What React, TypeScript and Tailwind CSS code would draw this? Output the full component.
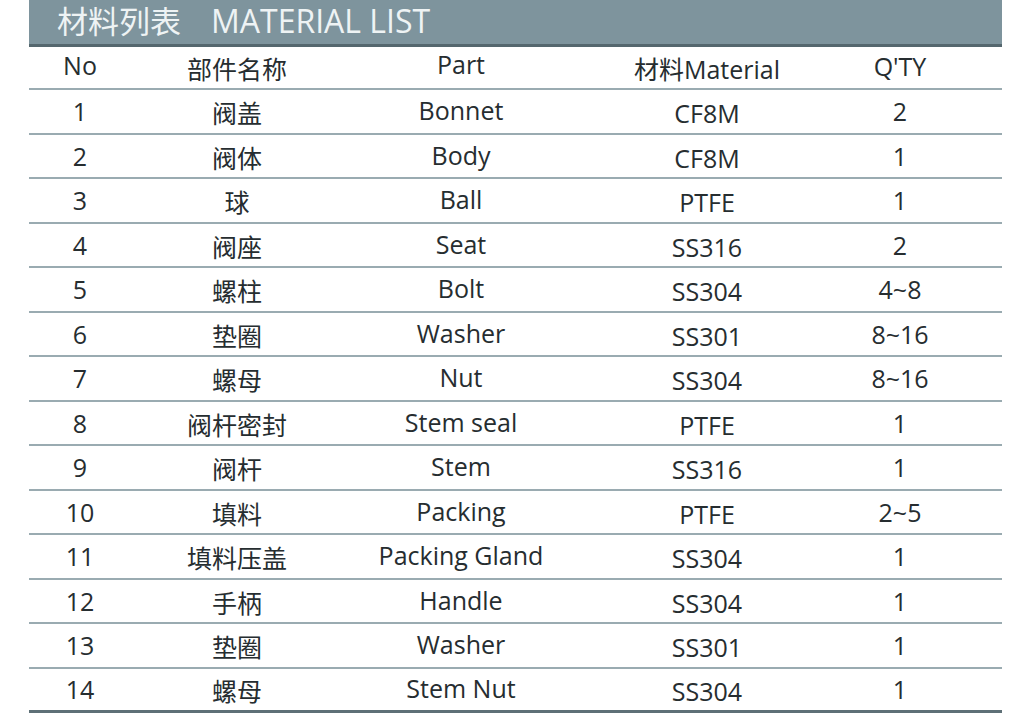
import React from "react";

const rows: [string, string, string, string, string][] = [
  ["1", "阀盖", "Bonnet", "CF8M", "2"],
  ["2", "阀体", "Body", "CF8M", "1"],
  ["3", "球", "Ball", "PTFE", "1"],
  ["4", "阀座", "Seat", "SS316", "2"],
  ["5", "螺柱", "Bolt", "SS304", "4~8"],
  ["6", "垫圈", "Washer", "SS301", "8~16"],
  ["7", "螺母", "Nut", "SS304", "8~16"],
  ["8", "阀杆密封", "Stem seal", "PTFE", "1"],
  ["9", "阀杆", "Stem", "SS316", "1"],
  ["10", "填料", "Packing", "PTFE", "2~5"],
  ["11", "填料压盖", "Packing Gland", "SS304", "1"],
  ["12", "手柄", "Handle", "SS304", "1"],
  ["13", "垫圈", "Washer", "SS301", "1"],
  ["14", "螺母", "Stem Nut", "SS304", "1"],
];

const font = { fontFamily: '"Open Sans", "Noto Sans CJK SC", sans-serif' };

export default function App() {
  return (
    <div className="w-[1024px] h-[725px] bg-white overflow-hidden" style={font}>
      <div className="ml-[29px] w-[973px]">
        <div className="h-[47px] bg-[#7e949d] border-b-[3px] border-[#55676e] flex items-center pl-[28px] text-[#eef3f4]">
          <span className="text-[31px] leading-[40px] pb-[3px]">材料列表</span>
          <span className="text-[32px] leading-[40px] pb-[3px] ml-[30px]">MATERIAL LIST</span>
        </div>
        <div className="grid grid-cols-[102px_212px_236px_256px_130px_1fr] h-[43px] border-b-[2px] border-[#9aabb1] text-[25px] font-medium text-[#262d30] items-center leading-[30px]">
          <div className="text-center pb-[6px]">No</div>
          <div className="text-center pt-[2px] font-normal">部件名称</div>
          <div className="text-center pb-[8px]">Part</div>
          <div className="text-center pt-[2px]">
            <span className="font-normal">材料</span>Material
          </div>
          <div className="text-center pb-[4px]">Q'TY</div>
          <div />
        </div>
        {rows.map((r, i) => (
          <div
            key={i}
            className={`grid grid-cols-[102px_212px_236px_256px_130px_1fr] h-[44.5px] items-center text-[25px] font-medium text-[#262d30] leading-[30px] ${
              i === rows.length - 1 ? "border-b-[3px] border-[#5e7077]" : "border-b-[2px] border-[#9aabb1]"
            }`}
          >
            <div className="text-center">{r[0]}</div>
            <div className="text-center pt-[4px] font-normal">{r[1]}</div>
            <div className="text-center pb-[2px]">{r[2]}</div>
            <div className="text-center pt-[4px]">{r[3]}</div>
            <div className="text-center">{r[4]}</div>
            <div />
          </div>
        ))}
      </div>
    </div>
  );
}
